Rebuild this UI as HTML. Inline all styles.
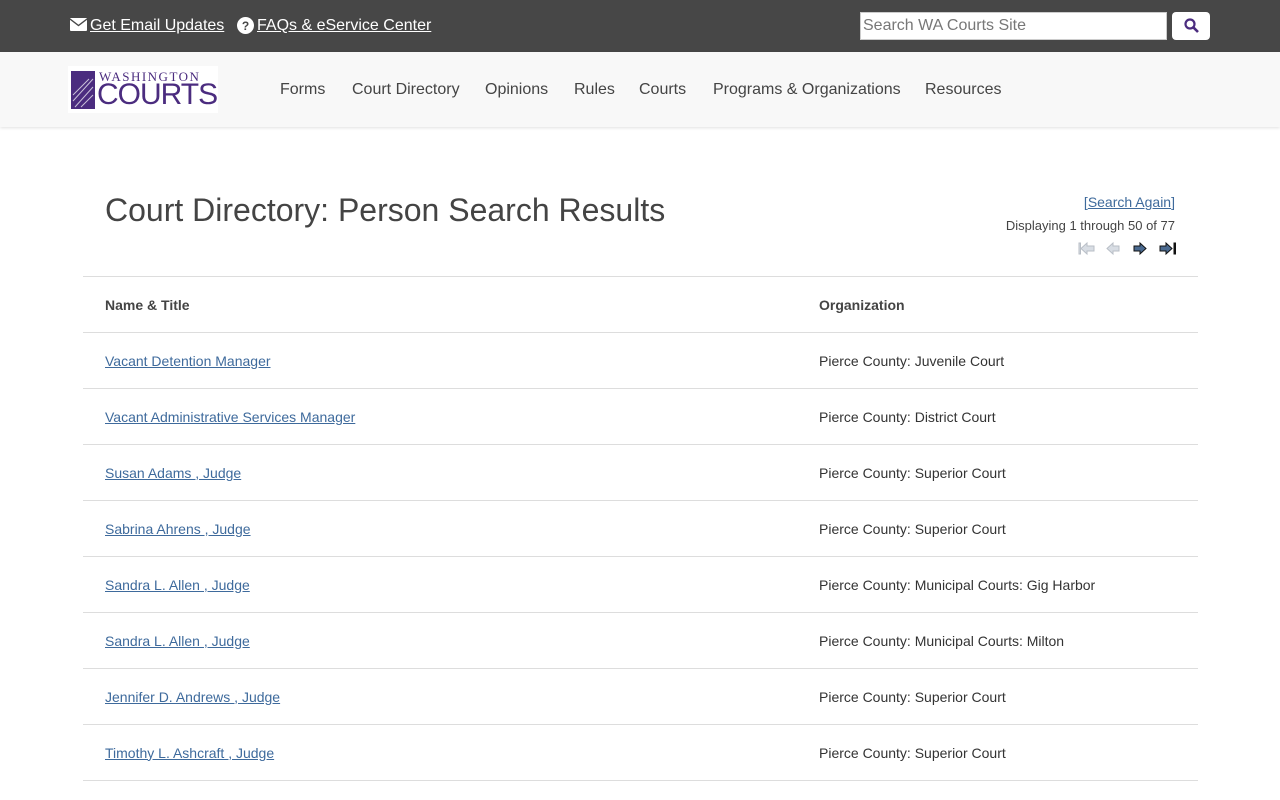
<!DOCTYPE html>
<html><head><meta charset="utf-8"><style>
*{margin:0;padding:0;box-sizing:border-box}
body{width:1280px;height:800px;overflow:hidden;background:#fff;font-family:"Liberation Sans",Arial,sans-serif;color:#333}
.top{height:52px;background:#474747;position:relative}
.top a{color:#fff;font-size:16px;position:absolute;top:17px;text-decoration:underline;line-height:18px}
.search{position:absolute;left:860px;top:12px;width:307px;height:28px;background:#fff;border:1px solid #ccc;font-size:16px;color:#777;padding:4px 2px}
.sbtn{position:absolute;left:1172px;top:12px;width:38px;height:28px;background:#fff;border-radius:4px}
.nav{height:75px;background:#f8f8f8;position:relative;box-shadow:0 1px 3px rgba(0,0,0,.12)}
.logo{position:absolute;left:68px;top:14px;width:150px;height:47px;background:#fff}
.nav .m{position:absolute;top:29px;font-size:16px;color:#444}
h1{position:absolute;left:105px;top:192px;font-size:32px;font-weight:normal;color:#444}
.sa{position:absolute;right:105px;top:194px;font-size:14px;color:#3e6a9c}
.disp{position:absolute;right:105px;top:218px;font-size:13px;color:#444}
table{position:absolute;left:83px;top:276px;width:1115px;border-collapse:collapse;font-size:14px}
td,th{height:56px;border-top:1px solid #ddd;border-bottom:1px solid #ddd;text-align:left;padding-left:22px;vertical-align:middle}
th{font-weight:bold;color:#444}
td a{color:#3e6a9c;text-decoration:underline}
td:last-child,th:last-child{padding-left:0;width:379px}
</style></head><body>
<div class="top">
<svg style="position:absolute;left:70px;top:18px" width="17" height="13" viewBox="0 0 17 13"><rect width="17" height="13" rx="1" fill="#fff"/><path d="M0 1l8.5 6.5L17 1" stroke="#474747" stroke-width="1.4" fill="none"/></svg>
<a style="left:90px">Get Email Updates</a>
<svg style="position:absolute;left:237px;top:17px" width="17" height="17" viewBox="0 0 17 17"><circle cx="8.5" cy="8.5" r="8.5" fill="#fff"/><text x="8.5" y="13" font-size="12" font-weight="bold" text-anchor="middle" fill="#474747" font-family="Liberation Sans">?</text></svg>
<a style="left:257px">FAQs &amp; eService Center</a>
<div class="search">Search WA Courts Site</div>
<div class="sbtn"><svg style="position:absolute;left:12px;top:6px" width="15" height="15" viewBox="0 0 15 15"><circle cx="6" cy="6" r="4.5" stroke="#4b2c7f" stroke-width="2.2" fill="none"/><path d="M9.3 9.3L14 14" stroke="#4b2c7f" stroke-width="2.6"/></svg></div>
</div>
<div class="nav">
<div class="logo">
<svg style="position:absolute;left:3px;top:5px" width="24" height="38" viewBox="0 0 24 38"><rect width="24" height="38" fill="#4b2c7f"/><path d="M2 30L22 8M2 24L18 8M4 36L22 16M10 36L22 24" stroke="#fff" stroke-width="1" opacity=".7"/></svg>
<div style="position:absolute;left:31px;top:3px;font-size:13px;letter-spacing:1.5px;color:#4b2c7f;font-family:'Liberation Serif',serif">WASHINGTON</div>
<div style="position:absolute;left:29px;top:14px;font-size:30px;color:#4b2c7f;font-family:'Liberation Sans',sans-serif;letter-spacing:-1px;line-height:30px">COURTS</div>
</div>
<span class="m" style="left:280px">Forms</span>
<span class="m" style="left:352px">Court Directory</span>
<span class="m" style="left:485px">Opinions</span>
<span class="m" style="left:574px">Rules</span>
<span class="m" style="left:639px">Courts</span>
<span class="m" style="left:713px">Programs &amp; Organizations</span>
<span class="m" style="left:925px">Resources</span>
</div>
<h1>Court Directory: Person Search Results</h1>
<div class="sa">[<u>Search Again</u>]</div>
<div class="disp">Displaying 1 through 50 of 77</div>
<svg style="position:absolute;left:1078px;top:241px" width="100" height="15" viewBox="0 0 100 15">
<g fill="#d8dde4" stroke="#b8bec6"><rect x="1" y="2" width="1.5" height="11"/><path d="M3 7.5L9 2v3h7v5H9v3z"/><path d="M29 7.5L35 2v3h6v5h-6v3z"/></g>
<g fill="#4a6a90" stroke="#111"><path d="M56 5h6V2l6 5.5-6 5.5v-3h-6z"/><path d="M82 5h6V2l6 5.5-6 5.5v-3h-6z"/><rect x="96" y="2" width="1.5" height="11" fill="#111"/></g>
</svg>
<table>
<tr><th>Name &amp; Title</th><th>Organization</th></tr>
<tr><td><a>Vacant Detention Manager</a></td><td>Pierce County: Juvenile Court</td></tr>
<tr><td><a>Vacant Administrative Services Manager</a></td><td>Pierce County: District Court</td></tr>
<tr><td><a>Susan Adams , Judge</a></td><td>Pierce County: Superior Court</td></tr>
<tr><td><a>Sabrina Ahrens , Judge</a></td><td>Pierce County: Superior Court</td></tr>
<tr><td><a>Sandra L. Allen , Judge</a></td><td>Pierce County: Municipal Courts: Gig Harbor</td></tr>
<tr><td><a>Sandra L. Allen , Judge</a></td><td>Pierce County: Municipal Courts: Milton</td></tr>
<tr><td><a>Jennifer D. Andrews , Judge</a></td><td>Pierce County: Superior Court</td></tr>
<tr><td><a>Timothy L. Ashcraft , Judge</a></td><td>Pierce County: Superior Court</td></tr>
</table>
</body></html>
